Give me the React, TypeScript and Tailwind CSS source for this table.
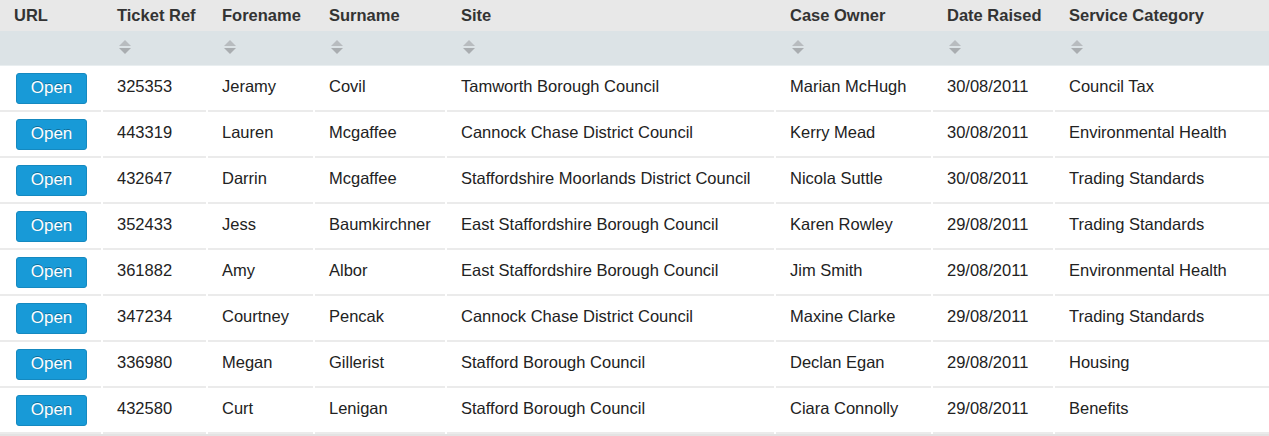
import React from "react";

const cols = "grid grid-cols-[101px_103px_105px_130px_327px_155px_120px_1fr] gap-x-[2px]";

const headers = ["URL", "Ticket Ref", "Forename", "Surname", "Site", "Case Owner", "Date Raised", "Service Category"];

const rows = [
  ["325353", "Jeramy", "Covil", "Tamworth Borough Council", "Marian McHugh", "30/08/2011", "Council Tax"],
  ["443319", "Lauren", "Mcgaffee", "Cannock Chase District Council", "Kerry Mead", "30/08/2011", "Environmental Health"],
  ["432647", "Darrin", "Mcgaffee", "Staffordshire Moorlands District Council", "Nicola Suttle", "30/08/2011", "Trading Standards"],
  ["352433", "Jess", "Baumkirchner", "East Staffordshire Borough Council", "Karen Rowley", "29/08/2011", "Trading Standards"],
  ["361882", "Amy", "Albor", "East Staffordshire Borough Council", "Jim Smith", "29/08/2011", "Environmental Health"],
  ["347234", "Courtney", "Pencak", "Cannock Chase District Council", "Maxine Clarke", "29/08/2011", "Trading Standards"],
  ["336980", "Megan", "Gillerist", "Stafford Borough Council", "Declan Egan", "29/08/2011", "Housing"],
  ["432580", "Curt", "Lenigan", "Stafford Borough Council", "Ciara Connolly", "29/08/2011", "Benefits"],
];

function SortIcon() {
  return (
    <svg width="14" height="16" viewBox="0 0 14 16">
      <path d="M7 1 L13 7 L1 7 Z" fill="#b8bcbf" />
      <path d="M1 9 L13 9 L7 15 Z" fill="#a9adb0" />
    </svg>
  );
}

export default function App() {
  return (
    <div className="w-[1269px] h-[436px] bg-white overflow-hidden text-[16.5px] font-['Liberation_Sans',Arial,sans-serif]">
      <div className={`${cols} bg-[#e8e8e8] h-[31px] items-center`}>
        {headers.map((h, i) => (
          <div key={i} className="pl-[14px] font-bold text-[#333333] whitespace-nowrap">
            {h}
          </div>
        ))}
      </div>
      <div className={`${cols} bg-[#dce3e6] h-[35px] items-center border-b border-[#e9eef0]`}>
        {headers.map((h, i) => (
          <div key={i} className="pl-[15px] pb-[3px] flex items-center">
            {i > 0 ? <SortIcon /> : null}
          </div>
        ))}
      </div>
      {rows.map((r, ri) => (
        <div key={ri} className={`${cols} h-[46px]`}>
          <div className="border-b-2 border-[#ebebeb] pl-[16px] flex items-center">
            <button className="w-[71px] h-[31px] rounded-[3px] bg-[#189ad7] text-white text-[17px] [text-shadow:0_-1px_0_rgba(0,0,0,0.3)] border border-[#1589c0]">
              Open
            </button>
          </div>
          {r.map((c, ci) => (
            <div key={ci} className="border-b-2 border-[#ebebeb] pl-[14px] flex items-center text-[#222222] whitespace-nowrap pb-[4px]">
              {c}
            </div>
          ))}
        </div>
      ))}
      <div className="h-[4px] bg-[#e3e3e3]" />
    </div>
  );
}
